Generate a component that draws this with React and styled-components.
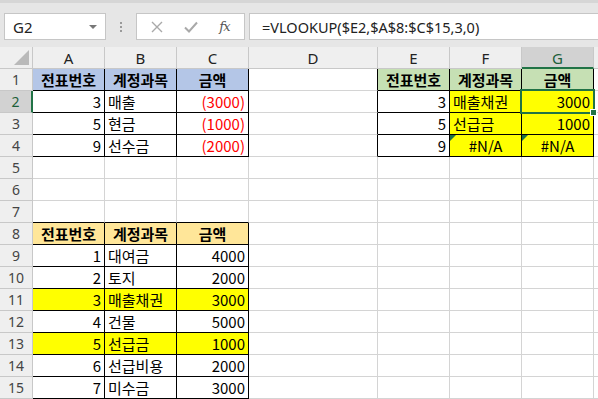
import React from 'react';
import styled, { createGlobalStyle } from 'styled-components';

const GlobalStyle = createGlobalStyle`
  html, body { margin: 0; padding: 0; background: #fff; overflow: hidden; }
  body { font-family: "Noto Sans", "Noto Sans CJK KR", sans-serif; }
`;

const BLUE = '#b4c6e7';
const GREEN = '#c6e0b4';
const ORANGE = '#ffe699';
const YELLOW = '#ffff00';
const GRID = '#d4d4d4';
const EXCEL = '#217346';

const COLS = ['A', 'B', 'C', 'D', 'E', 'F', 'G', 'H'];
const ROWS = Array.from({ length: 15 }, (_, i) => i + 1);

const Window = styled.div`
  width: 598px;
  height: 399px;
  overflow: hidden;
  display: flex;
  flex-direction: column;
  background: #fff;
`;

const FormulaBar = styled.div`
  height: 50px;
  box-sizing: border-box;
  background: #e6e6e6;
  border-top: 3px solid #d6d6d6;
  padding: 10px 0 0 4px;
  display: flex;
  align-items: flex-start;
`;

const Box = styled.div`
  height: 27px;
  box-sizing: border-box;
  background: #fff;
  border: 1px solid #c6c6c6;
  display: flex;
  align-items: center;
`;

const NameBox = styled(Box)`
  width: 102px;
  padding: 0 8px 0 8px;
  justify-content: space-between;
  font-size: 15px;
  color: #222;
`;

const Caret = styled.span`
  width: 0;
  height: 0;
  border-left: 4px solid transparent;
  border-right: 4px solid transparent;
  border-top: 4px solid #777;
`;

const Grip = styled.div`
  width: 30px;
  height: 27px;
  display: flex;
  flex-direction: column;
  align-items: center;
  justify-content: center;
  gap: 2px;
  span { width: 2px; height: 2px; background: #9a9a9a; }
`;

const Buttons = styled(Box)`
  width: 109px;
  justify-content: space-around;
  padding: 0 4px;
`;

const Fx = styled.span`
  font-family: "DejaVu Serif", "Liberation Serif", serif;
  font-style: italic;
  font-size: 13px;
  color: #555;
  letter-spacing: -1px;
`;

const FormulaInput = styled(Box)`
  flex: 1;
  margin-left: 4px;
  margin-right: -4px;
  padding-left: 12px;
  font-size: 14.5px;
  color: #222;
  white-space: nowrap;
`;

const Sheet = styled.div`
  display: grid;
  grid-template-columns: 33px 72px 72px 72px 129px 72px 72px 72px 1fr;
  grid-auto-rows: 22px;
`;

const Head = styled.div`
  box-sizing: border-box;
  overflow: hidden;
  background: ${p => (p.$active ? '#d2d2d2' : '#efefef')};
  border-right: 1px solid ${p => (p.$row && p.$active ? EXCEL : '#c8c8c8')};
  border-right-width: ${p => (p.$row && p.$active ? '2px' : '1px')};
  border-bottom: ${p => (!p.$row && p.$active ? `2px solid ${EXCEL}` : '1px solid #c8c8c8')};
  display: flex;
  align-items: center;
  justify-content: center;
  font-size: ${p => (p.$row ? '14px' : '15px')};
  color: ${p => (p.$active ? '#1d5f3a' : p.$row ? '#444' : '#222')};
  padding-top: ${p => (!p.$row && p.$active ? '1px' : '0')};
`;

const Corner = styled(Head)`
  justify-content: flex-end;
  align-items: flex-end;
  padding: 0 3px 3px 0;
`;

const Triangle = styled.span`
  width: 0;
  height: 0;
  border-left: 15px solid transparent;
  border-bottom: 15px solid #b9b9b9;
`;

const Cell = styled.div`
  position: relative;
  box-sizing: border-box;
  background: ${p => p.$bg || '#fff'};
  border-right: 1px solid ${p => p.$right};
  border-bottom: 1px solid ${p => p.$bottom};
  display: flex;
  align-items: center;
  justify-content: ${p => p.$align};
  padding: 0 3px;
  font-family: "Noto Sans CJK KR", "Noto Sans", sans-serif;
  font-size: 15px;
  font-weight: ${p => (p.$bold ? 700 : 400)};
  color: ${p => p.$color || '#000'};
  white-space: nowrap;
  overflow: visible;
`;

const ErrorMark = styled.span`
  position: absolute;
  top: 0;
  left: 0;
  width: 0;
  height: 0;
  border-top: 6px solid #1e7145;
  border-right: 6px solid transparent;
`;

const Selection = styled.span`
  position: absolute;
  top: -2px;
  left: -2px;
  right: -2px;
  bottom: -2px;
  border: 2px solid ${EXCEL};
  z-index: 2;
  pointer-events: none;
`;

const Handle = styled.span`
  position: absolute;
  right: -4px;
  bottom: -4px;
  width: 5px;
  height: 5px;
  background: ${EXCEL};
  border: 1px solid #fff;
`;

const head = (v, bg) => ({ v, bg, bold: true, align: 'center' });
const num = (v, extra = {}) => ({ v, align: 'flex-end', ...extra });
const txt = (v, extra = {}) => ({ v, align: 'flex-start', ...extra });

const cells = {
  A1: head('전표번호', BLUE), B1: head('계정과목', BLUE), C1: head('금액', BLUE),
  E1: head('전표번호', GREEN), F1: head('계정과목', GREEN), G1: head('금액', GREEN),
  A2: num('3'), B2: txt('매출'), C2: num('(3000)', { color: '#ff0000' }),
  E2: num('3'), F2: txt('매출채권', { bg: YELLOW }), G2: num('3000', { bg: YELLOW, selected: true }),
  A3: num('5'), B3: txt('현금'), C3: num('(1000)', { color: '#ff0000' }),
  E3: num('5'), F3: txt('선급금', { bg: YELLOW }), G3: num('1000', { bg: YELLOW }),
  A4: num('9'), B4: txt('선수금'), C4: num('(2000)', { color: '#ff0000' }),
  E4: num('9'),
  F4: { v: '#N/A', align: 'center', bg: YELLOW, err: true },
  G4: { v: '#N/A', align: 'center', bg: YELLOW, err: true },
  A8: head('전표번호', ORANGE), B8: head('계정과목', ORANGE), C8: head('금액', ORANGE),
};

const ledger = [
  ['1', '대여금', '4000'],
  ['2', '토지', '2000'],
  ['3', '매출채권', '3000', YELLOW],
  ['4', '건물', '5000'],
  ['5', '선급금', '1000', YELLOW],
  ['6', '선급비용', '2000'],
  ['7', '미수금', '3000'],
];
ledger.forEach(([n, name, amt, bg], i) => {
  const r = 9 + i;
  cells[`A${r}`] = num(n, { bg });
  cells[`B${r}`] = txt(name, { bg });
  cells[`C${r}`] = num(amt, { bg });
});

const boxes = [
  { c0: 0, c1: 2, r0: 1, r1: 4 },
  { c0: 4, c1: 6, r0: 1, r1: 4 },
  { c0: 0, c1: 2, r0: 8, r1: 15 },
];
const boxed = (c, r) => boxes.some(b => c >= b.c0 && c <= b.c1 && r >= b.r0 && r <= b.r1);

export default function App() {
  return (
    <Window>
      <GlobalStyle />
      <FormulaBar>
        <NameBox>G2<Caret /></NameBox>
        <Grip><span /><span /><span /></Grip>
        <Buttons>
          <svg width="12" height="12" viewBox="0 0 12 12">
            <path d="M1 1 L11 11 M11 1 L1 11" stroke="#a9a9a9" strokeWidth="1.4" fill="none" />
          </svg>
          <svg width="14" height="12" viewBox="0 0 14 12">
            <path d="M1 6.5 L5 10.5 L13 1.5" stroke="#a9a9a9" strokeWidth="2" fill="none" />
          </svg>
          <Fx>fx</Fx>
        </Buttons>
        <FormulaInput>=VLOOKUP($E2,$A$8:$C$15,3,0)</FormulaInput>
      </FormulaBar>
      <Sheet>
        <Corner><Triangle /></Corner>
        {COLS.map(c => <Head key={c} $active={c === 'G'}>{c === 'H' ? '' : c}</Head>)}
        {ROWS.map(r => (
          <React.Fragment key={r}>
            <Head $row $active={r === 2}>{r}</Head>
            {COLS.map((c, ci) => {
              const cell = cells[`${c}${r}`] || {};
              const right = boxed(ci, r) || boxed(ci + 1, r) ? '#000' : GRID;
              const bottom = boxed(ci, r) || boxed(ci, r + 1) ? '#000' : GRID;
              return (
                <Cell
                  key={c}
                  $bg={cell.bg}
                  $align={cell.align || 'flex-start'}
                  $bold={cell.bold}
                  $color={cell.color}
                  $right={right}
                  $bottom={bottom}
                >
                  {cell.err && <ErrorMark />}
                  {cell.v}
                  {cell.selected && <Selection><Handle /></Selection>}
                </Cell>
              );
            })}
          </React.Fragment>
        ))}
      </Sheet>
    </Window>
  );
}
